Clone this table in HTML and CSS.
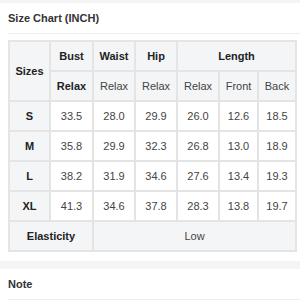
FILE: index.html
```html
<!DOCTYPE html>
<html>
<head>
<meta charset="utf-8">
<link rel="stylesheet" href="styles.css">
</head>
<body>
<div class="band band-top"></div>
<div class="section">
  <div class="title">Size Chart (INCH)</div>
  <table class="chart">
    <colgroup>
      <col style="width:41px"><col style="width:43px"><col style="width:42px"><col style="width:42px"><col style="width:42px"><col style="width:39px"><col style="width:38px">
    </colgroup>
    <tr>
      <th class="hd" rowspan="2">Sizes</th>
      <th class="hd">Bust</th>
      <th class="hd">Waist</th>
      <th class="hd">Hip</th>
      <th class="hd" colspan="3">Length</th>
    </tr>
    <tr>
      <th class="hd">Relax</th>
      <td class="hd">Relax</td>
      <td class="hd">Relax</td>
      <td class="hd">Relax</td>
      <td class="hd">Front</td>
      <td class="hd">Back</td>
    </tr>
    <tr><th class="hd">S</th><td>33.5</td><td>28.0</td><td>29.9</td><td>26.0</td><td>12.6</td><td>18.5</td></tr>
    <tr><th class="hd">M</th><td>35.8</td><td>29.9</td><td>32.3</td><td>26.8</td><td>13.0</td><td>18.9</td></tr>
    <tr><th class="hd">L</th><td>38.2</td><td>31.9</td><td>34.6</td><td>27.6</td><td>13.4</td><td>19.3</td></tr>
    <tr><th class="hd">XL</th><td>41.3</td><td>34.6</td><td>37.8</td><td>28.3</td><td>13.8</td><td>19.7</td></tr>
    <tr><th class="hd" colspan="2">Elasticity</th><td class="hd" colspan="5">Low</td></tr>
  </table>
</div>
<div class="band band-mid"></div>
<div class="section">
  <div class="title">Note</div>
</div>
</body>
</html>
```
FILE: styles.css
```css
html, body {
  margin: 0;
  padding: 0;
  background: #ffffff;
  font-family: "Liberation Sans", Arial, sans-serif;
  color: #333333;
}
.band {
  background: #f4f5f7;
}
.band-top {
  height: 3px;
}
.band-mid {
  height: 8px;
  margin-top: 9px;
}
.section {
  padding-left: 8px;
}
.title {
  height: 30px;
  line-height: 30px;
  font-size: 11px;
  font-weight: bold;
  color: #333333;
  border-bottom: 1px solid #eeeeee;
}
.chart {
  margin-top: 6px;
  border-collapse: collapse;
  table-layout: fixed;
  width: 287px;
  font-size: 11px;
}
.chart th, .chart td {
  border: 2px solid #e4e4e4;
  height: 28px;
  padding: 0;
  text-align: center;
  color: #444444;
  font-weight: normal;
}
.chart th {
  font-weight: bold;
  color: #222222;
}
.chart .hd {
  background: #f3f5f7;
}
```
